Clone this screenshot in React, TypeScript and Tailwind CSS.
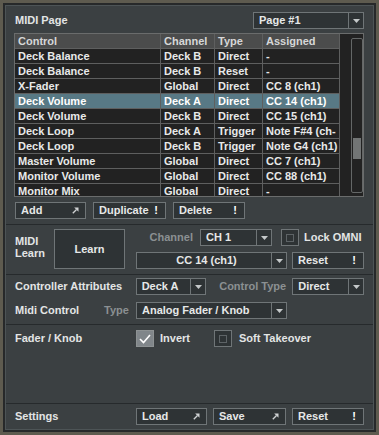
import React from 'react';

type Row = { control: string; channel: string; type: string; assigned: string; selected?: boolean };

const rows: Row[] = [
  { control: 'Deck Balance', channel: 'Deck B', type: 'Direct', assigned: '-' },
  { control: 'Deck Balance', channel: 'Deck B', type: 'Reset', assigned: '-' },
  { control: 'X-Fader', channel: 'Global', type: 'Direct', assigned: 'CC 8 (ch1)' },
  { control: 'Deck Volume', channel: 'Deck A', type: 'Direct', assigned: 'CC 14 (ch1)', selected: true },
  { control: 'Deck Volume', channel: 'Deck B', type: 'Direct', assigned: 'CC 15 (ch1)' },
  { control: 'Deck Loop', channel: 'Deck A', type: 'Trigger', assigned: 'Note F#4 (ch-' },
  { control: 'Deck Loop', channel: 'Deck B', type: 'Trigger', assigned: 'Note G4 (ch1)' },
  { control: 'Master Volume', channel: 'Global', type: 'Direct', assigned: 'CC 7 (ch1)' },
  { control: 'Monitor Volume', channel: 'Global', type: 'Direct', assigned: 'CC 88 (ch1)' },
  { control: 'Monitor Mix', channel: 'Global', type: 'Direct', assigned: '-' },
];

// little up-right arrow used on Add / Load / Save
const LinkArrow = () => (
  <svg width="7" height="7" viewBox="0 0 7 7">
    <path d="M0.8 6.2 L4.5 2.5" stroke="#cfd2d3" strokeWidth="1.3" />
    <path d="M2.2 0.5 H6.5 V4.8 Z" fill="#cfd2d3" />
  </svg>
);

const Caret = () => (
  <svg width="7" height="4" viewBox="0 0 7 4">
    <path d="M0 0 H7 L3.5 4 Z" fill="#c4c8c9" />
  </svg>
);

const Button = ({ label, icon, className = '' }: { label: string; icon?: 'arrow' | 'bang'; className?: string }) => (
  <div className={`h-[17px] flex items-center justify-between border border-[#6f7577] bg-[#2e3335] pl-[5px] pr-[6px] text-[#e6e8e8] ${className}`}>
    <span>{label}</span>
    {icon === 'arrow' && <LinkArrow />}
    {icon === 'bang' && <span className="font-bold text-white pr-[1px]">!</span>}
  </div>
);

const Dropdown = ({ value, className = '' }: { value: string; className?: string }) => (
  <div className={`h-[17px] flex items-stretch border border-[#6f7577] bg-[#2e3335] text-[#e6e8e8] ${className}`}>
    <span className="flex-1 flex items-center pl-[5px] overflow-hidden whitespace-nowrap">{value}</span>
    <span className="w-[15px] flex items-center justify-center border-l border-[#6f7577]">
      <Caret />
    </span>
  </div>
);

const Checkbox = ({ checked }: { checked?: boolean }) =>
  checked ? (
    <div className="w-[18px] h-[17px] border border-[#8d9293] bg-[#80868a] flex items-center justify-center">
      <svg width="12" height="10" viewBox="0 0 12 10">
        <path d="M1 5 L4.5 8.5 L11 1" stroke="#ffffff" strokeWidth="1.6" fill="none" />
      </svg>
    </div>
  ) : (
    <div className="w-[18px] h-[17px] border border-[#6f7577] bg-[#2e3335] flex items-center justify-center">
      <div className="w-[8px] h-[8px] border border-[#5d6366]" />
    </div>
  );

const Separator = () => <div className="h-px bg-[#262a2c]" />;

export default function App() {
  return (
    <div className="w-[379px] h-[435px] bg-[#5e5b4f] p-[3px] font-['Liberation_Sans',Arial,sans-serif] text-[11px] font-bold leading-none">
      <div className="h-full border-2 border-[#27292a]">
        <div className="h-full border border-[#4d5456] bg-[#3b4042] flex flex-col text-[#e3e5e5]">
          {/* MIDI page + table */}
          <div className="pl-[8px] pr-[9px] pt-[6px]">
            <div className="h-[17px] flex items-center justify-between">
              <span className="pl-px">MIDI Page</span>
              <Dropdown value="Page #1" className="w-[111px]" />
            </div>

            <div className="mt-[4px] h-[164px] border border-[#6a6c6c] bg-[#222222] flex overflow-hidden">
              <div className="w-[325px] shrink-0">
                <div className="grid grid-cols-[146px_54px_48px_77px] h-[15px] bg-[#4b4c4c] text-[#d6d7d7] border-b border-[#5e5f5f]">
                  {['Control', 'Channel', 'Type', 'Assigned'].map((h) => (
                    <div key={h} className="border-r border-[#5e5f5f] pl-[3px] flex items-center">{h}</div>
                  ))}
                </div>
                {rows.map((r, i) => (
                  <div
                    key={i}
                    className={`grid grid-cols-[146px_54px_48px_77px] h-[15px] border-b border-[#5e5f5f] ${r.selected ? 'bg-[#587985] text-white' : 'text-[#e8e9e9]'}`}
                  >
                    {[r.control, r.channel, r.type, r.assigned].map((c, j) => (
                      <div key={j} className="border-r border-[#5e5f5f] pl-[3px] flex items-center overflow-hidden whitespace-nowrap">{c}</div>
                    ))}
                  </div>
                ))}
              </div>
              {/* scrollbar */}
              <div className="flex-1 pl-[11px] pr-[0px] pt-[4px] pb-[3px]">
                <div className="h-full w-[12px] border border-[#646767] rounded-[2px] pt-[99px] px-px">
                  <div className="h-[21px] bg-[#727575]" />
                </div>
              </div>
            </div>

            <div className="mt-[5px] flex gap-[6px] pl-px">
              <Button label="Add" icon="arrow" className="w-[71px]" />
              <Button label="Duplicate" icon="bang" className="w-[73px] ml-px" />
              <Button label="Delete" icon="bang" className="w-[72px] ml-px" />
            </div>
          </div>

          <div className="mt-[5px]">
            <Separator />
          </div>

          {/* MIDI Learn */}
          <div className="h-[49px] pl-[8px] pr-[9px] pt-[4px] flex">
            <div className="w-[40px] pl-px pt-[6px] leading-[12px]">
              MIDI
              <br />
              Learn
            </div>
            <div className="w-[71px] h-[40px] border border-[#6f7577] bg-[#2e3335] flex items-center justify-center text-[#e6e8e8]">
              Learn
            </div>
            <div className="ml-[11px] flex flex-col gap-[6px]">
              <div className="flex items-center">
                <span className="w-[64px] text-right pr-[7px] text-[#8b9092]">Channel</span>
                <Dropdown value="CH 1" className="w-[72px]" />
                <div className="ml-[9px]">
                  <Checkbox />
                </div>
                <span className="ml-[5px]">Lock OMNI</span>
              </div>
              <div className="flex items-center">
                <Dropdown value="CC 14 (ch1)" className="w-[151px] [&>span:first-child]:justify-center" />
                <Button label="Reset" icon="bang" className="w-[72px] ml-[5px]" />
              </div>
            </div>
          </div>

          <Separator />

          {/* Controller attributes */}
          <div className="h-[49px] pl-[8px] pr-[9px] pt-[3px] flex flex-col gap-[7px]">
            <div className="flex items-center">
              <span className="w-[122px] pl-px">Controller Attributes</span>
              <Dropdown value="Deck A" className="w-[71px]" />
              <span className="w-[86px] text-right pr-[6px] text-[#8b9092]">Control Type</span>
              <Dropdown value="Direct" className="w-[72px]" />
            </div>
            <div className="flex items-center">
              <span className="w-[90px] pl-px">Midi Control</span>
              <span className="w-[32px] text-[#8b9092]">Type</span>
              <Dropdown value="Analog Fader / Knob" className="w-[151px]" />
            </div>
          </div>

          <Separator />

          {/* Fader / Knob */}
          <div className="flex-1 pl-[8px] pr-[9px] pt-[5px]">
            <div className="flex items-center">
              <span className="w-[122px] pl-px">Fader / Knob</span>
              <Checkbox checked />
              <span className="ml-[6px] w-[54px]">Invert</span>
              <Checkbox />
              <span className="ml-[7px]">Soft Takeover</span>
            </div>
          </div>

          <Separator />

          {/* Settings */}
          <div className="h-[25px] pl-[8px] pr-[9px] pt-[4px] flex items-start">
            <span className="w-[122px] pl-px h-[17px] flex items-center">Settings</span>
            <Button label="Load" icon="arrow" className="w-[71px]" />
            <Button label="Save" icon="arrow" className="w-[73px] ml-[6px]" />
            <Button label="Reset" icon="bang" className="w-[72px] ml-[6px]" />
          </div>
        </div>
      </div>
    </div>
  );
}
